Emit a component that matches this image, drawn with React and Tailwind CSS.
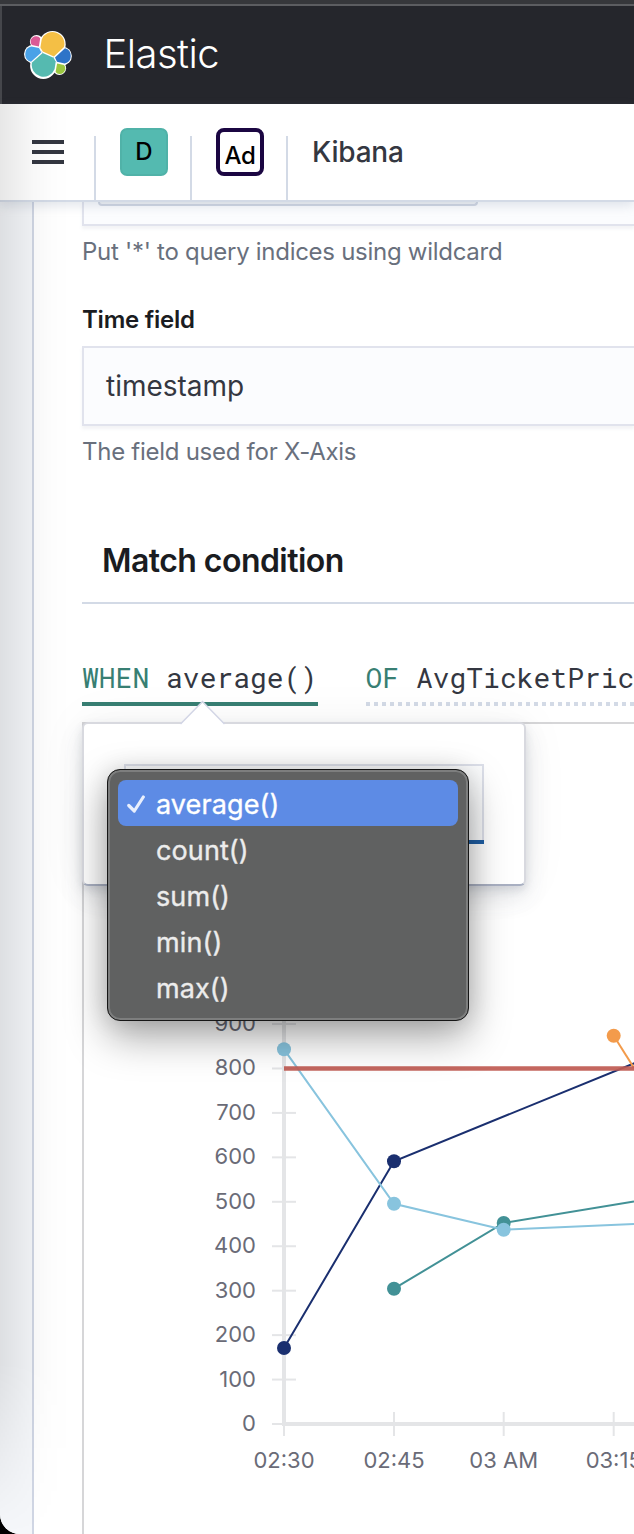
import React from "react";

const yTicks = [0, 100, 200, 300, 400, 500, 600, 700, 800, 900];
const xTicks = [
  { x: 284, label: "02:30" },
  { x: 394, label: "02:45" },
  { x: 503.7, label: "03 AM" },
  { x: 613.7, label: "03:15" },
];
const series = [
  { color: "#429196", points: [[394, 1288.7], [503.7, 1223], [634, 1201.5]], dots: 2 },
  { color: "#1a2f6f", points: [[284, 1348], [394, 1161.3], [636, 1062.5]], dots: 2 },
  { color: "#88c4de", points: [[284, 1049.3], [394, 1203.8], [503.7, 1229.7], [634, 1224]], dots: 3 },
  { color: "#f39b4b", points: [[613.7, 1035.7], [634, 1068]], dots: 1 },
];
const options = ["average()", "count()", "sum()", "min()", "max()"];

function Logo() {
  return (
    <svg className="h-12 w-12 shrink-0" viewBox="0 0 48 48">
      <g fill="#fff">
        <circle cx="28.5" cy="13.2" r="13.200" />
        <circle cx="19.3" cy="34.7" r="13.200" />
        <circle cx="12.6" cy="10.7" r="6.700" />
        <circle cx="9.2" cy="23" r="9.200" />
        <circle cx="38.7" cy="25" r="9.200" />
        <circle cx="35.4" cy="37.2" r="6.700" />
      </g>
      <path fill="#f4bf45" d="M18.800 20.500 29.900 25.500 40 16A11.800 11.800 0 0 0 17.700 8.400L16.400 16.400z" />
      <path fill="#55bab0" d="M8 31.400A11.800 11.800 0 0 0 30.600 38L31.700 30.500 29.500 26.700 18.700 21.900z" />
      <path fill="#db5a96" d="M7.800 14 14.900 15.600 16.200 7.200A5.400 5.400 0 0 0 7.800 14z" />
      <path fill="#4aa2e8" d="M7.300 15.400A7.900 7.900 0 0 0 7 30.700L17.300 21.500 15 17.100z" />
      <path fill="#9bc640" d="M31.600 40.900A5.400 5.400 0 0 0 40.100 34L33.100 32.400z" />
      <path fill="#2e74c8" d="M33 30.800 40.700 32.600A7.900 7.900 0 0 0 41 17.300L31 26.600z" />
    </svg>
  );
}

function Header() {
  return (
    <header className="flex h-[104px] shrink-0 flex-col bg-[#25262c]">
      <div className="h-1.5 border-b-2 border-[#5c5d61] bg-[#36373b]" />
      <div className="flex flex-1 items-center border-l-2 border-[#45464b] pb-[3px] pl-[22px]">
        <div className="pt-0.5">
          <Logo />
        </div>
        <span className="ml-[31.500px] text-[40px] font-light leading-none tracking-[-0.55px] text-white">Elastic</span>
      </div>
    </header>
  );
}

function NavBar() {
  return (
    <nav className="relative z-10 flex h-[98px] shrink-0 items-start border-b-2 border-[#d3dae6] bg-white shadow-[0_4px_10px_rgba(130,145,170,0.22)]">
      <div className="flex h-24 w-24 items-end border-0">
        <div className="flex h-16 w-24 items-start border-r-2 border-[#d3dae6] pl-8 pt-1">
          <div className="flex flex-col gap-1.5">
            <div className="h-1 w-8 bg-[#343741]" />
            <div className="h-1 w-8 bg-[#343741]" />
            <div className="h-1 w-8 bg-[#343741]" />
          </div>
        </div>
      </div>
      <div className="flex h-24 w-24 items-end">
        <div className="h-16 w-24 border-r-2 border-[#d3dae6] pl-6">
          <div className="-mt-2 flex h-12 w-12 items-center justify-center rounded-[7px] border-2 border-[#50b2a8] bg-[#54bab0] text-[24px] font-medium text-black">D</div>
        </div>
      </div>
      <div className="flex h-24 w-24 items-end">
        <div className="h-16 w-24 border-r-2 border-[#d3dae6] pl-6">
          <div className="-mt-2 flex h-12 w-12 items-center justify-center rounded-[8px] border-4 border-[#1b0642] bg-white pt-2 text-[24px] font-medium tracking-[-0.4px] text-black">Ad</div>
        </div>
      </div>
      <span className="pl-6 pt-8 text-[28px] font-medium leading-8 tracking-[-0.2px] text-[#343741]">Kibana</span>
    </nav>
  );
}

function Chart() {
  return (
    <svg className="block h-[810px] w-[550px]" viewBox="84 724 550 810">
      <g stroke="#e4e5e7" fill="none">
        <path strokeWidth="4" d="M284 980V1424M282 1424H634" />
        {yTicks.map((v) => (
          <path key={v} strokeWidth="2" d={`M272 ${1424 - v * 0.4444}h${v === 0 ? 12 : 24}`} />
        ))}
        {xTicks.map((t) => (
          <path key={t.x} strokeWidth="2" d={`M${t.x} ${t.x === 284 ? 1424 : 1412}V1436`} />
        ))}
      </g>
      <g fill="#6a6b77" fontSize="22" className="font-['Inter',sans-serif]">
        {yTicks.map((v) => (
          <text key={v} x="256" y={1431 - v * 0.4444} textAnchor="end">{v}</text>
        ))}
        {xTicks.map((t) => (
          <text key={t.x} x={t.x} y="1468" textAnchor="middle">{t.label}</text>
        ))}
      </g>
      {series.map((s) => (
        <g key={s.color}>
          <polyline points={s.points.join(" ")} fill="none" stroke={s.color} strokeWidth="2" />
          {s.points.slice(0, s.dots).map((p) => (
            <circle key={p[0]} cx={p[0]} cy={p[1]} r="7" fill={s.color} />
          ))}
        </g>
      ))}
      <path d="M284 1068.500H634" stroke="#bf5b53" strokeOpacity="0.93" strokeWidth="4.500" />
    </svg>
  );
}

function Popover() {
  return (
    <div className="absolute -left-0.5 -top-0.5 h-[164px] w-[444px] rounded-md border-2 border-b-[#a9b0c2] border-l-[#d8d9df] border-r-[#d8d9df] border-t-[#d8d9df] bg-white px-10 pt-10 shadow-[0_12px_24px_rgba(65,78,101,0.12),0_4px_8px_rgba(65,78,101,0.14),0_0_50px_rgba(0,0,0,0.05)]">
      <div className="flex h-20 w-[360px] flex-col">
        <div className="flex-1 border-x-2 border-t-2 border-[#dde0ea] bg-[#fbfcfd]" />
        <div className="h-1 bg-[#1f5fa5]" />
      </div>
      <svg className="absolute left-[94.500px] -top-[24px] h-[26px] w-12" viewBox="0 0 48 26">
        <path d="M1 25 23.500 2 46 25V26H1z" fill="#fff" />
        <path d="M1.500 24 23.500 1.500 45.500 24" fill="none" stroke="#d3d6e6" strokeWidth="1.500" />
      </svg>
    </div>
  );
}

function SelectMenu() {
  return (
    <ul className="absolute left-[23px] top-[45px] flex h-[252px] w-[362px] flex-col rounded-[13px] border border-[#161616] bg-[#606161] px-[8px] pt-[8px] shadow-[0_16px_40px_rgba(0,0,0,0.35),0_0_24px_rgba(0,0,0,0.12)] ring-2 ring-inset ring-[#7d7e7e]">
      {options.map((o, i) => (
        <li
          key={o}
          className={
            i === 0
              ? "mx-0.5 mt-0.5 flex h-[46px] items-center rounded-lg bg-[#5d8be5] pl-2 text-[27px] text-white"
              : "mx-0.5 flex h-[46px] items-center pl-2 text-[27px] text-[#ececec]"
          }
        >
          <span className="flex w-[30px] pt-1">
            {i === 0 && (
              <svg className="h-5 w-[22px]" viewBox="0 0 22 20">
                <path d="M2.800 10.500 8.300 16 17.300 2" fill="none" stroke="#e9effd" strokeWidth="3.200" strokeLinecap="round" strokeLinejoin="round" />
              </svg>
            )}
          </span>
          <span className="pt-0.5 leading-none tracking-[0.1px] [-webkit-text-stroke:0.35px_currentColor]">{o}</span>
        </li>
      ))}
    </ul>
  );
}

export default function App() {
  return (
    <div className="h-[1534px] w-[634px] overflow-hidden bg-black">
      <div className="relative flex h-full w-full flex-col overflow-hidden rounded-bl-[20px] bg-white font-['Inter',sans-serif]">
        <Header />
        <NavBar />
        <div className="flex h-[1332px]">
          <div className="w-8 shrink-0 bg-[#f5f7fa]" />
          <main className="flex w-[602px] shrink-0 flex-col border-l-2 border-[#d0d6e4] bg-white pl-12">
            <div className="h-6 border-b-2 border-l-2 border-[#e1e3ed] bg-[#fbfcfe] pl-3.5 shadow-[0_3px_3px_rgba(150,155,175,0.12)]">
              <div className="h-1 w-[380px] rounded-b-[4px] border-x-2 border-b-2 border-[#cfd5e2] bg-[#eff1f5]" />
            </div>
            <p className="mt-2.5 h-8 text-[24px] leading-8 tracking-[-0.28px] text-[#69707d]">Put '*' to query indices using wildcard</p>
            <p className="mt-9 h-8 text-[24px] font-semibold leading-8 tracking-[-0.25px] text-[#1a1c21]">Time field</p>
            <div className="mt-2.5 flex h-20 items-center border-y-2 border-l-2 border-[#e1e3ed] bg-[#fbfcfe] pl-[22px] text-[28px] text-[#343741] shadow-[0_3px_3px_rgba(150,155,175,0.12)]">timestamp</div>
            <p className="mt-2.5 h-8 text-[24px] leading-8 tracking-[-0.27px] text-[#69707d]">The field used for X-Axis</p>
            <div className="mt-[52px] flex h-[84px] items-center border-b-2 border-[#d3dae6] pl-5 text-[32px] font-semibold tracking-[-0.55px] text-[#1a1c21]">
              <h2 className="leading-none">Match condition</h2>
            </div>
            <div className="mt-[52px] flex h-[50px] gap-[47.500px] overflow-hidden whitespace-pre font-['Roboto_Mono','DejaVu_Sans_Mono',monospace] text-[28px] leading-[44px] text-[#343741]">
              <div className="h-[50px] w-[236px] shrink-0 border-b-4 border-[#387f73]"><span className="text-[#387f73]">WHEN</span> average()</div>
              <div className="flex h-[50px] shrink-0 flex-col">
                <span className="h-[46px]"><span className="text-[#387f73]">OF</span> AvgTicketPrice</span>
                <span className="h-1 bg-[repeating-linear-gradient(to_right,#d3dae6_0_4px,transparent_4px_8px)]" />
              </div>
            </div>
            <section className="relative mt-4 h-[812px] shrink-0 border-l-2 border-t-2 border-[#d6d6d8]">
              <Chart />
              <Popover />
              <SelectMenu />
            </section>
          </main>
        </div>
        <div className="pointer-events-none absolute bottom-0 left-0 top-[104px] z-20 w-[70px] bg-[linear-gradient(to_right,rgba(0,0,0,0.095),rgba(0,0,0,0.03)_45%,rgba(0,0,0,0.008)_75%,transparent)] [mask-image:linear-gradient(to_bottom,black_88%,transparent)]" />
      </div>
    </div>
  );
}
